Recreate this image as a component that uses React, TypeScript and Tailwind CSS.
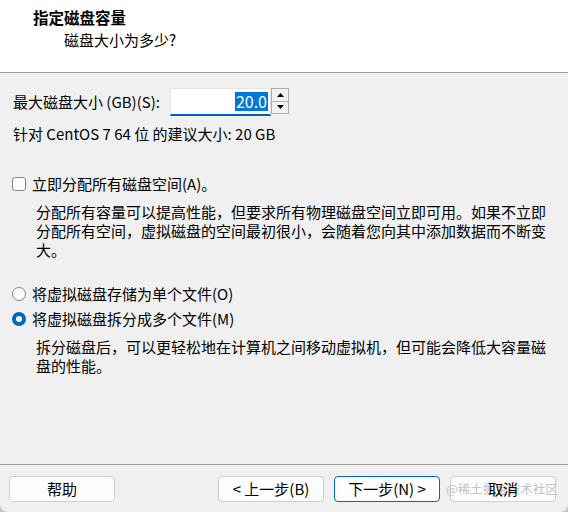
import React from "react";

function Checkbox() {
  return (
    <span className="inline-block w-[14px] h-[14px] rounded-[3px] border border-[#858585] bg-[#fbfbfb] shrink-0" />
  );
}

function Radio({ checked }: { checked?: boolean }) {
  if (checked) {
    return (
      <span className="flex items-center justify-center w-[14px] h-[14px] rounded-full bg-[#0067c0] shrink-0">
        <span className="w-[6px] h-[6px] rounded-full bg-white" />
      </span>
    );
  }
  return <span className="inline-block w-[14px] h-[14px] rounded-full border border-[#858585] bg-[#fbfbfb] shrink-0" />;
}

function Btn({ children, primary }: { children: React.ReactNode; primary?: boolean }) {
  return (
    <div
      className={
        "relative flex items-center justify-center w-[106px] h-[26px] rounded-[4px] bg-[#fdfdfd] border " +
        (primary ? "border-[#0067c0]" : "border-[#d0d0d0]")
      }
    >
      {children}
    </div>
  );
}

export default function App() {
  return (
    <div className="w-[568px] h-[512px] bg-[#c8c8c8] font-['Noto_Sans_CJK_SC','Noto_Sans',sans-serif] text-[15px] text-black">
      <div className="w-full h-full flex flex-col rounded-b-[8px] overflow-hidden bg-[#f0f0f0]">
        <div className="h-[73px] bg-white border-b border-[#a0a0a0] shrink-0">
          <div className="pl-[33px] pt-[7px] leading-[20px] font-bold text-[15.5px]">指定磁盘容量</div>
          <div className="pl-[64px] pt-[3px] leading-[20px]">磁盘大小为多少?</div>
        </div>

        <div className="pl-[13px] pr-[12px]">
          <div className="flex items-center h-[28px] mt-[15px]">
            <div className="w-[157px] leading-[20px]">最大磁盘大小 (GB)(S):</div>
            <div className="flex items-start h-[28px]">
              <div className="w-[101px] h-[28px] bg-white border border-[#e3e3e3] border-b-2 border-b-[#005fb8] flex items-center justify-end pr-[2px]">
                <span className="bg-[#0078d7] text-white text-[16px] leading-[19px] px-[1px]">20.0</span>
              </div>
              <div className="w-[18px] h-[26px] flex flex-col border border-[#adadad] bg-[#f3f3f3]">
                <div className="flex-1 flex items-center justify-center border-b border-[#adadad]">
                  <svg width="7" height="4" viewBox="0 0 7 4"><path d="M0 4 L3.5 0 L7 4 Z" fill="#000" /></svg>
                </div>
                <div className="flex-1 flex items-center justify-center">
                  <svg width="7" height="4" viewBox="0 0 7 4"><path d="M0 0 L3.5 4 L7 0 Z" fill="#000" /></svg>
                </div>
              </div>
            </div>
          </div>
          <div className="mt-[8px] leading-[20px]">针对 CentOS 7 64 位 的建议大小: 20 GB</div>

          <div className="mt-[30px] -ml-px flex items-center gap-[6px] h-[20px]">
            <Checkbox />
            <span className="leading-[20px]">立即分配所有磁盘空间(A)。</span>
          </div>
          <p className="mt-[8px] pl-[23px] leading-[19px]">
            分配所有容量可以提高性能，但要求所有物理磁盘空间立即可用。如果不立即分配所有空间，虚拟磁盘的空间最初很小，会随着您向其中添加数据而不断变大。
          </p>

          <div className="mt-[25px] -ml-px flex items-center gap-[6px] h-[20px]">
            <Radio />
            <span className="leading-[20px]">将虚拟磁盘存储为单个文件(O)</span>
          </div>
          <div className="mt-[5px] -ml-px flex items-center gap-[6px] h-[20px]">
            <Radio checked />
            <span className="leading-[20px]">将虚拟磁盘拆分成多个文件(M)</span>
          </div>
          <p className="mt-[8px] pl-[23px] leading-[19px]">
            拆分磁盘后，可以更轻松地在计算机之间移动虚拟机，但可能会降低大容量磁盘的性能。
          </p>
        </div>

        <div className="mt-auto h-[48px] border-t border-[#a0a0a0] shrink-0 flex items-start pt-[11px] pl-[9px] pr-[12px]">
          <Btn>帮助</Btn>
          <div className="ml-auto flex gap-[10px]">
            <Btn>&lt; 上一步(B)</Btn>
            <Btn primary>下一步(N) &gt;</Btn>
            <Btn>
              <span className="absolute left-[-5px] top-[3px] text-[12.5px] leading-[18px] text-[#c4c4c4] whitespace-nowrap">@稀土掘金技术社区</span>
              <span className="relative">取消</span>
            </Btn>
          </div>
        </div>
      </div>
    </div>
  );
}
